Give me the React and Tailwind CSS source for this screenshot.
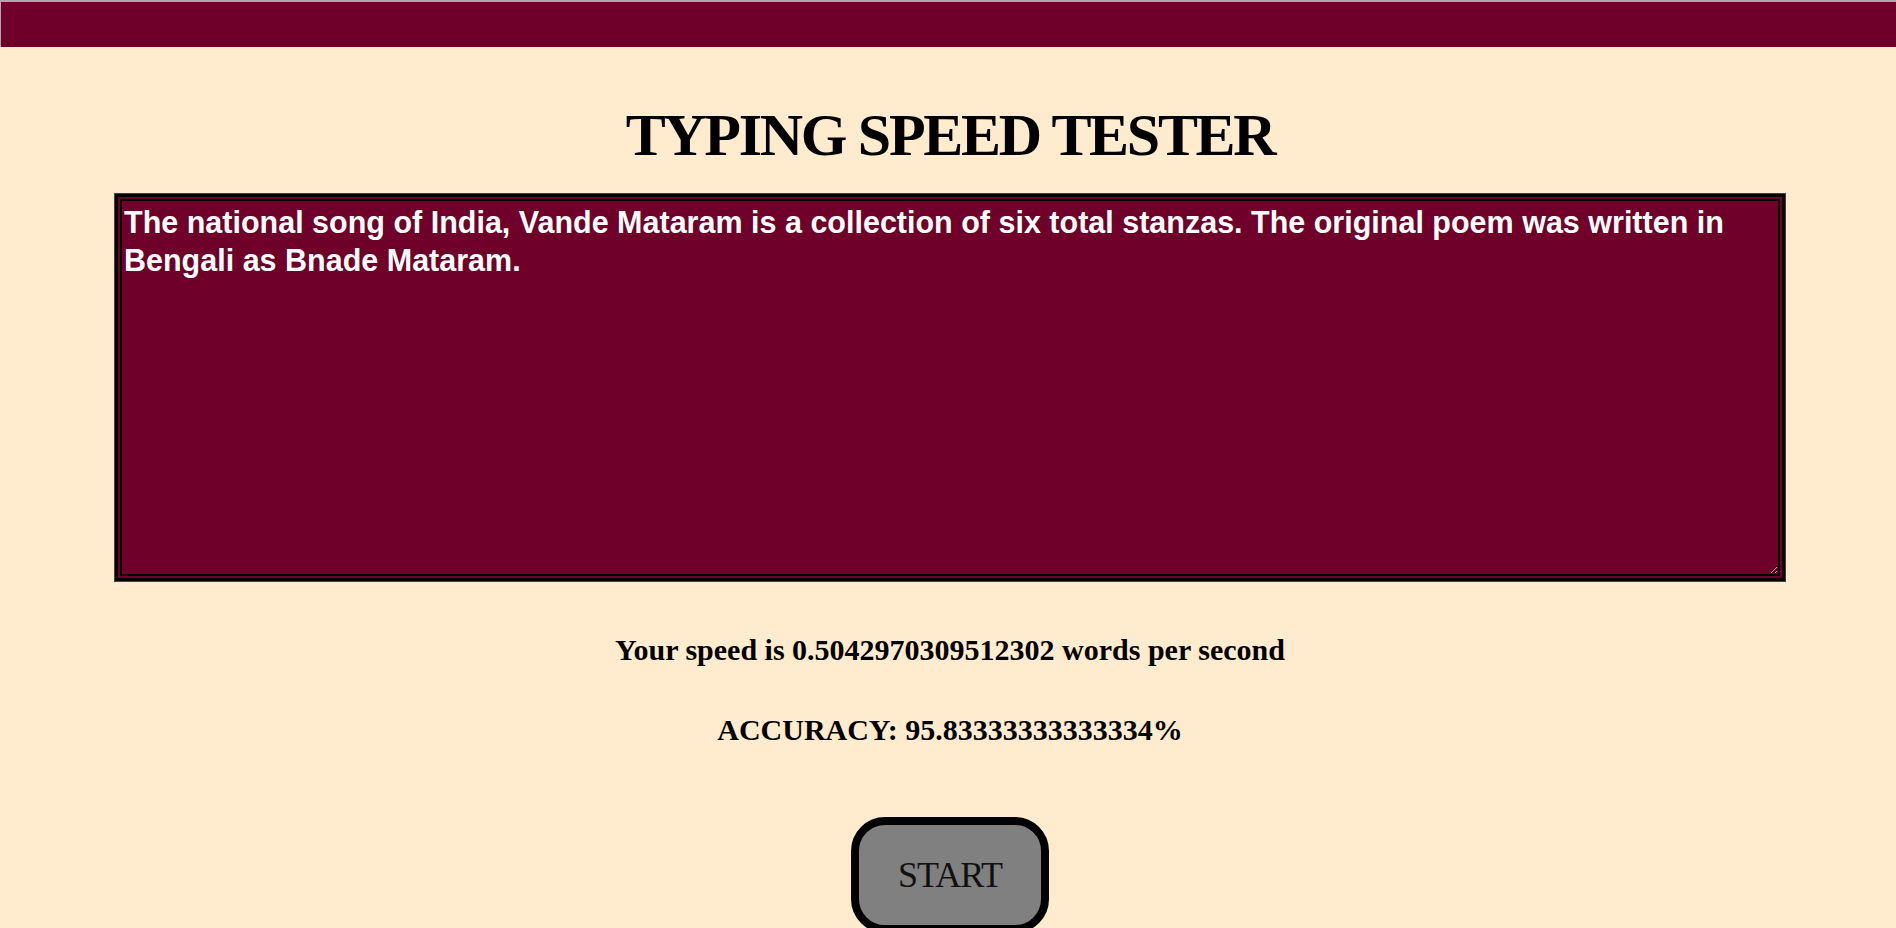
import React from "react";

export default function App() {
  const text =
    "The national song of India, Vande Mataram is a collection of six total stanzas. The original poem was written in Bengali as Bnade Mataram.";
  return (
    <div className="w-[1896px] h-[928px] overflow-hidden bg-[#ffebcd]">
      <div className="h-[47px] bg-[#6f0029] border-t-2 border-l border-[#a9a9a9]" />
      <div className="flex flex-col items-center pl-[4px]">
        <h1
          className="mt-[54px] text-[60px] leading-[69px] font-bold tracking-[-2.3px] text-black"
          style={{ fontFamily: '"Liberation Serif", serif' }}
        >
          TYPING SPEED TESTER
        </h1>
        <div className="mt-[23px] w-[1672px] h-[389px] border border-[#5a3a40] bg-black p-[3px]">
          <div className="w-full h-full bg-[#6f0029] p-[2px]">
            <textarea
              spellCheck={false}
              defaultValue={text}
              className="block w-full h-full border-2 border-black bg-[#6f0029] p-[2px] text-white text-[30.5px] leading-[38px] font-bold outline-none"
              style={{ fontFamily: '"Liberation Sans", Arial, sans-serif' }}
            />
          </div>
        </div>
        <p
          className="mt-[51px] text-[30px] leading-[33px] font-bold text-black"
          style={{ fontFamily: '"Liberation Serif", serif' }}
        >
          Your speed is 0.5042970309512302 words per second
        </p>
        <p
          className="mt-[47px] text-[30px] leading-[33px] font-bold text-black"
          style={{ fontFamily: '"Liberation Serif", serif' }}
        >
          ACCURACY: 95.83333333333334%
        </p>
        <button
          className="mt-[71px] shrink-0 w-[198px] h-[116px] border-[8px] border-black rounded-[34px] bg-[#808080] flex items-center justify-center text-[36px] text-[#111] tracking-[-1px]"
          style={{ fontFamily: '"Liberation Serif", serif' }}
        >
          START
        </button>
      </div>
    </div>
  );
}
